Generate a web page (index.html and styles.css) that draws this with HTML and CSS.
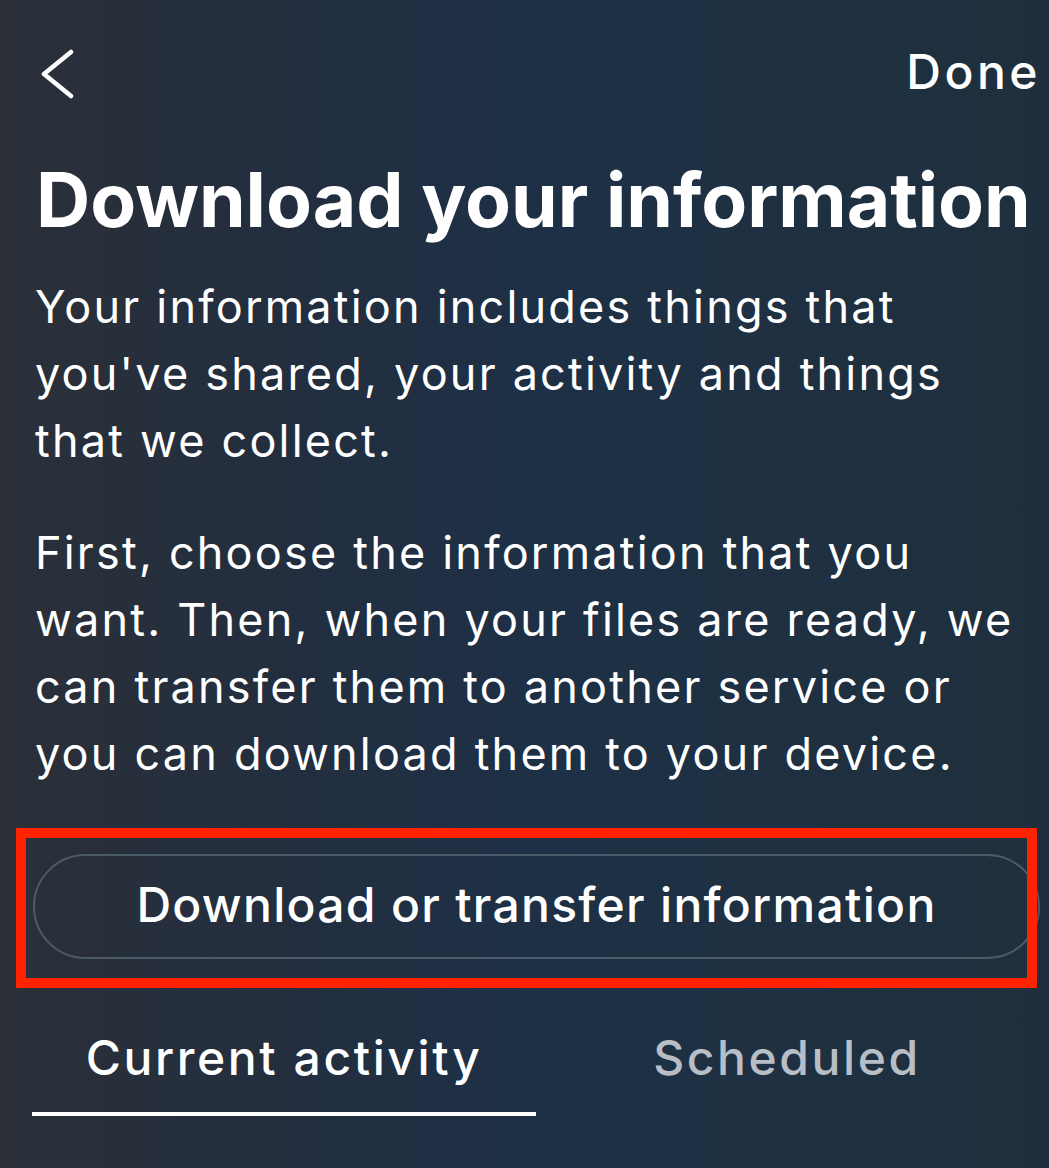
FILE: index.html
```html
<!DOCTYPE html>
<html lang="en">
<head>
<meta charset="utf-8">
<title>Download your information</title>
<link rel="stylesheet" href="styles.css">
</head>
<body>
<div class="screen">
  <header class="topbar">
    <button class="back" aria-label="Back">
      <svg width="36" height="52" viewBox="0 0 36 52" aria-hidden="true">
        <path d="M31 3 L4 25 L31 47" fill="none" stroke="#ffffff" stroke-width="4.5" stroke-linecap="round" stroke-linejoin="round"/>
      </svg>
    </button>
    <span class="done">Done</span>
  </header>

  <h1 class="title">Download your information</h1>

  <p class="text">Your information includes things that you've shared, your activity and things that we collect.</p>
  <p class="text second">First, choose the information that you want. Then, when your files are ready, we can transfer them to another service or you can download them to your device.</p>

  <div class="action">
    <button class="pill">Download or transfer information</button>
    <div class="highlight"></div>
  </div>

  <nav class="tabs">
    <div class="tab active">Current activity</div>
    <div class="tab">Scheduled</div>
  </nav>
</div>
</body>
</html>
```

FILE: styles.css
```css
* { box-sizing: border-box; }

html, body {
  margin: 0;
  padding: 0;
}

body {
  width: 1049px;
  height: 1168px;
  overflow: hidden;
  font-family: Inter, "Open Sans", "Liberation Sans", sans-serif;
  color: #ffffff;
  background: linear-gradient(90deg, #2b3039 0%, #232e3e 25%, #1e3046 50%, #1e3042 70%, #1f2f3d 100%);
}

.screen {
  display: flex;
  flex-direction: column;
  height: 1168px;
}

.topbar {
  display: flex;
  justify-content: space-between;
  align-items: center;
  height: 60px;
  margin-top: 42px;
  padding: 0 8px 0 40px;
}

.back {
  background: none;
  border: 0;
  padding: 0;
  margin-top: 5px;
  width: 36px;
  height: 52px;
  display: flex;
}

.done {
  font-size: 48px;
  font-weight: 500;
  line-height: 60px;
  letter-spacing: 3.5px;
}

.title {
  margin: 53px 0 0 36px;
  font-size: 75px;
  font-weight: 700;
  line-height: 90px;
  letter-spacing: 0;
  white-space: nowrap;
}

.text {
  margin: 28px 0 0 35px;
  width: 1000px;
  font-size: 45px;
  font-weight: 400;
  line-height: 67px;
  letter-spacing: 2.2px;
}

.text.second {
  margin-top: 45px;
}

.action {
  position: relative;
  margin-top: 67px;
  height: 105px;
}

.pill {
  display: flex;
  align-items: center;
  justify-content: center;
  margin-left: 33px;
  width: 1007px;
  height: 105px;
  border: 2px solid #4b5b6a;
  border-radius: 53px;
  background: transparent;
  color: #ffffff;
  font-family: inherit;
  font-size: 48px;
  font-weight: 500;
  letter-spacing: 1.3px;
  padding: 0 0 4px 0;
}

.highlight {
  position: absolute;
  left: 16px;
  top: -26px;
  width: 1021px;
  height: 160px;
  border: 10px solid #ff2200;
  pointer-events: none;
}

.tabs {
  display: grid;
  grid-template-columns: 504px 502px;
  margin: 69px 0 0 32px;
}

.tab {
  text-align: center;
  font-size: 48px;
  font-weight: 500;
  line-height: 60px;
  letter-spacing: 2.6px;
  padding-bottom: 24px;
  color: #b8bec6;
  border-bottom: 4px solid transparent;
}

.tab.active {
  color: #ffffff;
  border-bottom-color: #ffffff;
}
```
